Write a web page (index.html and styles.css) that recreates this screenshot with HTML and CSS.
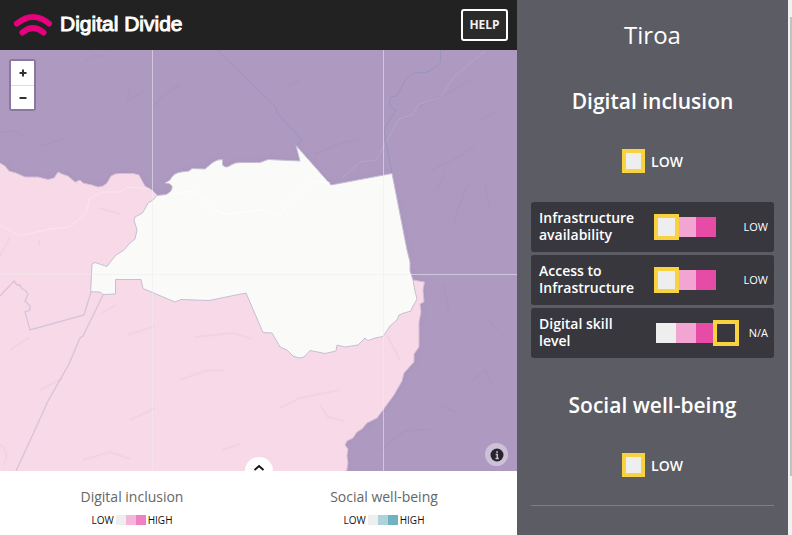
FILE: index.html
```html
<!DOCTYPE html>
<html lang="en">
<head>
<meta charset="utf-8">
<meta name="viewport" content="width=device-width, initial-scale=1">
<title>Digital Divide</title>
<link rel="stylesheet" href="styles.css">
</head>
<body>
<div class="app">
  <div class="main">
    <header class="topbar">
      <svg class="logo" viewBox="0 0 40 24" aria-hidden="true">
        <path d="M4 10.500Q20 -2.500 36 10.500M9.500 19.500Q20 10.500 30.500 19.500" fill="none" stroke="#e5007e" stroke-width="6" stroke-linecap="round"/>
      </svg>
      <h1 class="brand">Digital Divide</h1>
      <button class="help" type="button">HELP</button>
    </header>

    <div class="map">
      <svg class="terrain" viewBox="0 50 517 421" preserveAspectRatio="xMidYMid slice" role="img" aria-label="Map of areas around Tiroa">
        <defs>
          <filter id="edge" x="-5%" y="-5%" width="110%" height="110%"><feGaussianBlur stdDeviation="3"/></filter>
          <path id="pink" d="M-5 161L0 163 5 166 9 171 16 173 25 177 38 177 48 179.500 54 178 58 172 62 174 68 176 75 182 80 180 83 183 92 185 98 187 103 186 107 183 111 176 115 174 120 173.500 133 173.500 139 175 145 186 152 190 157 195 250 250 413 280 424.500 282 423 290 424 302 420 304 421 312 419 322 419 347 414 354 414 362 404 373 402 381 394 395 383 410 377 418 367 423 362 429 357 432 353 438 347 441 345 445 348 449 347 456 348 463 346 475 -5 475Z"/>
          <path id="white" d="M90.700 291.700L92 264 95 262.500 107 266.500 111 261 116 255 124 250 130 243 135 239 137 230 134 220Q134 216 138 215.500 143 214 145 209L148 203 153 200 157 195.500 166 194.500Q173 191 172 186 170 183 165 183L170 180Q173 173 181 172L189 171 192 168.500 205 169 212 163Q217 159 222.500 159.500V165Q226 169 231 165 235 162 242 162.500H260L268 159.500 300 161 296 145.500 331 185 392 173.500 407 250 410 262 410 271 413 280 415 291 417 299 412 308 411 311 404 313 399 315 397 320 390 326 383 336.500 375 338 368 340.500 365 338 358 345 345 347 337 345 336 351 325 353.500 310 350.500 304 357 299 358 293 356 287 350 280 347 279 345 272 333 263 332.500 246 293 209 300.500 181 299.500 175 302 143 288.500 141 279.500 115.500 279.500 115.500 294 103 294.500 100 292Z"/>
        </defs>
        <rect x="-200" y="-200" width="1200" height="1000" fill="#ae9ac0"/>
        <use href="#pink" fill="#a08cb6" opacity=".5" filter="url(#edge)"/>
        <use href="#white" fill="#a08cb6" opacity=".5" filter="url(#edge)"/>
        <use href="#pink" fill="#f8d9e8" stroke="#d5bdd5"/>
        <use href="#white" fill="#fafbf9" stroke="#c7bed4"/>
        <g fill="none" stroke="#9a94bd">
          <path d="M217 50L260 92 273 104 277 109 276 112 302 140 296 145"/>
          <path d="M440.500 50V62Q436 69 424 73L415 72 406 79 400 90 397 96 391 97Q388 104 392 108L396 110 384 129 386 143 392 173"/>
        </g>
        <g fill="none" stroke="#d6c4d9" stroke-width="1.300">
          <path d="M0 296L14 281 17 285 20 285 22 289 25 290 28 294 25 301 30 306 30 310 25 312 30 330 84 315 91 292"/>
          <path d="M103 295L83 336 80 338 69 364 48 401 34 432 16 471"/>
        </g>
        <path d="M0 225L20 236 50 229 70 227 87 212 89 199 103 192 121 192 128 187 150 189" fill="none" stroke="#fff" opacity=".3"/>
        <path d="M486 50L455 76 440 98 419 104 412 115 399 119 390 135 376 160 360 162 342 178" fill="none" stroke="#fff" opacity=".1"/>
        <path d="M173 194L192 191 205 199 217 210 225 214 240 213 260 210 279 215 299 193 312 181 330 183" fill="none" stroke="#fff"/>
        <g fill="none" stroke="#8b749e" stroke-width="2" opacity=".06">
          <path d="M85 61L95 55 105 57M130 90L127 101 145 91M152 107L170 90 181 84M0 132L14 131 22 135M40 146L64 139M288 85L300 80M315 154L342 143 362 138M419 107L450 92 470 80M431 173Q438 163 450 162L475 146M436 190L445 174M454 224L459 206 468 184M485 186L490 208M480 120L495 112M443 285L449 310M490 322L498 330M470 382L486 370 492 386M380 450L405 431 430 429M440 405L455 412"/>
        </g>
        <g fill="none" stroke="#b188a0" stroke-width="2" opacity=".07">
          <path d="M0 256L10 237M39 240V246M65 171L78 184M102 313L116 305M128 335L155 326M195 337L233 333 252 339M280 408L300 398 340 390M10 350L30 337M180 380L205 371 225 370M130 420L155 408M320 405L328 417 345 421M0 445Q10 450 4 465M83 460L110 452 130 459M222 450L240 444M40 390L63 378M387 335L400 360M99 208L120 214"/>
        </g>
        <path d="M152.500 -200V800M383.500 -200V800M-200 274.500H1000" stroke="#efedf0" opacity=".55"/>
      </svg>

      <div class="zoom">
        <button type="button" aria-label="Zoom in"><svg viewBox="0 0 10 10" aria-hidden="true"><path d="M1.500 5h7M5 1.500v7"/></svg></button>
        <button type="button" aria-label="Zoom out"><svg viewBox="0 0 10 10" aria-hidden="true"><path d="M1.500 5h7"/></svg></button>
      </div>

      <button class="info" type="button" aria-label="Map information">
        <svg viewBox="0 0 14 14" aria-hidden="true"><circle cx="7" cy="7" r="6.500" fill="#28242e"/><path d="M5.700 6.500H7.300V10M5.500 10.500H8.800M6.200 4H7.900" fill="none" stroke="#cdc1d8" stroke-width="1.400"/></svg>
      </button>

      <button class="toggle" type="button" aria-label="Show more layers">
        <svg viewBox="0 0 12 8" aria-hidden="true"><path d="M1.500 6L6 2 10.500 6" fill="none" stroke="#111" stroke-width="1.800"/></svg>
      </button>
    </div>

    <footer class="legends">
      <section class="legend">
        <h2>Digital inclusion</h2>
        <div class="scale"><span>LOW</span><span class="swatches pinks"><i></i><i></i><i></i></span><span>HIGH</span></div>
      </section>
      <section class="legend">
        <h2>Social well-being</h2>
        <div class="scale"><span>LOW</span><span class="swatches teals"><i></i><i></i><i></i></span><span>HIGH</span></div>
      </section>
    </footer>
  </div>

  <aside class="panel">
    <h2 class="place">Tiroa</h2>
    <section class="topic">
      <h3>Digital inclusion</h3>
      <p class="rating"><span class="chip"></span>LOW</p>
      <ul class="measures">
        <li><span class="name">Infrastructure availability</span><span class="bar"><i class="current"></i><i></i><i></i></span><span class="value">LOW</span></li>
        <li><span class="name">Access to Infrastructure</span><span class="bar"><i class="current"></i><i></i><i></i></span><span class="value">LOW</span></li>
        <li><span class="name">Digital skill level</span><span class="bar"><i></i><i></i><i></i><i class="none"></i></span><span class="value">N/A</span></li>
      </ul>
    </section>
    <section class="topic">
      <h3>Social well-being</h3>
      <p class="rating"><span class="chip"></span>LOW</p>
    </section>
    <hr>
  </aside>
  <div class="track" aria-hidden="true"><div class="thumb"></div></div>
</div>
</body>
</html>
```
FILE: styles.css
```css
* { box-sizing: border-box; }

body {
  margin: 0;
  font-family: "Open Sans", "Noto Sans", sans-serif;
}

h1, h2, h3, p, ul { margin: 0; padding: 0; }
ul { list-style: none; }
button { font-family: inherit; padding: 0; cursor: pointer; }
svg { display: block; }

.app {
  display: grid;
  grid-template-columns: 1fr 271px 4px;
  min-height: 100vh;
}

.main {
  display: flex;
  flex-direction: column;
  min-width: 0;
}

.topbar {
  display: flex;
  align-items: center;
  height: 50px;
  padding: 0 9px 0 13px;
  background: #222;
  color: #fff;
}

.logo { width: 40px; height: 24px; }

.brand {
  flex: 1;
  margin-left: 7px;
  padding-bottom: 2px;
  font: 21px/24px "Liberation Sans", Arial, sans-serif;
  -webkit-text-stroke: 1px #fff;
}

.help {
  width: 47px;
  height: 32px;
  border: 2px solid #fff;
  border-radius: 3px;
  background: #2b2b2b;
  color: #f2f2f2;
  font-size: 12px;
  font-weight: 700;
  line-height: 14px;
}

.map {
  position: relative;
  flex: 1;
  overflow: hidden;
}

.terrain {
  position: absolute;
  width: 100%;
  height: 100%;
}

.zoom {
  position: absolute;
  top: 9px;
  left: 9px;
  width: 27px;
  border: 2px solid #8b789e;
  border-radius: 3px;
}

.zoom button {
  display: grid;
  place-items: center;
  width: 100%;
  height: 24px;
  border: 0;
  background: #fff;
}

.zoom button + button { border-top: 1px solid #ddd; }
.zoom svg { width: 10px; height: 10px; stroke: #333; stroke-width: 2; }

.info {
  position: absolute;
  right: 9px;
  bottom: 5px;
  display: grid;
  place-items: center;
  width: 23px;
  height: 23px;
  border: 0;
  border-radius: 50%;
  background: #cdc1d8;
}

.info svg { width: 14px; height: 14px; }

.toggle {
  position: absolute;
  left: 50%;
  bottom: -14px;
  width: 28px;
  height: 28px;
  transform: translateX(-50%);
  border: 0;
  border-radius: 50%;
  background: #fff;
}

.toggle svg { width: 12px; height: 8px; margin: -6px auto 0; }

.legends {
  display: flex;
  height: 64px;
  padding: 16px 7px 0 6px;
  background: #fff;
}

.legend { flex: 1; text-align: center; }

.legend h2 {
  color: #666;
  font-size: 14px;
  font-weight: 400;
  line-height: 20px;
}

.scale {
  display: flex;
  justify-content: center;
  gap: 2px;
  margin-top: 6px;
  color: #111;
  font-size: 10px;
  line-height: 14px;
}

.swatches { display: flex; align-items: center; }
.swatches i { width: 10px; height: 10px; background: #eee; }
.pinks i:nth-child(2) { background: #f4b5da; }
.pinks i:nth-child(3) { background: #ed81c1; }
.teals i:nth-child(2) { background: #acd3dc; }
.teals i:nth-child(3) { background: #70b2c2; }

.panel {
  padding: 18px 14px 24px;
  background: #5c5c64;
  color: #fff;
}

.place {
  font-size: 24px;
  font-weight: 400;
  line-height: 34px;
  text-align: center;
}

.topic { padding-top: 34px; text-align: center; }
.topic + .topic { padding-top: 32px; }

.topic h3 {
  font-size: 21px;
  font-weight: 600;
  line-height: 30px;
}

.rating {
  display: flex;
  align-items: center;
  justify-content: center;
  gap: 6px;
  height: 24px;
  margin-top: 33px;
  font-size: 14px;
  font-weight: 600;
}

.chip {
  width: 23px;
  height: 24px;
  border: 4px solid #f8d33f;
  background: #eee;
}

.measures {
  display: grid;
  gap: 3px;
  margin-top: 29px;
  text-align: left;
}

.measures li {
  display: grid;
  grid-template-columns: 117px 1fr auto;
  align-items: center;
  height: 50px;
  padding: 0 6px 0 8px;
  border-radius: 3px;
  background: #38373d;
}

.name {
  max-width: 100px;
  padding-bottom: 2px;
  font-size: 14px;
  font-weight: 600;
  line-height: 17px;
}

.value { padding-bottom: 2px; font-size: 11px; }

.bar { display: flex; }
.bar i { position: relative; width: 20px; height: 20px; background: #eee; }
.bar i:nth-child(2) { background: #f2a4d2; }
.bar i:nth-child(3) { background: #e64ba6; }

.bar .current::after,
.bar .none::after {
  content: "";
  position: absolute;
  z-index: 1;
  inset: -3px -3px -3px -2px;
  border: 4px solid #f8d33f;
}

.bar .none { background: none; }
.bar .none::after { left: -3px; background: #38373d; }

hr {
  height: 1px;
  margin: 28px 0 0;
  border: 0;
  background: #7f7f82;
}

.track { padding: 17px 0 0 2px; background: #f1f1f1; }
.thumb { height: 459px; background: #c1c1c1; }
```
